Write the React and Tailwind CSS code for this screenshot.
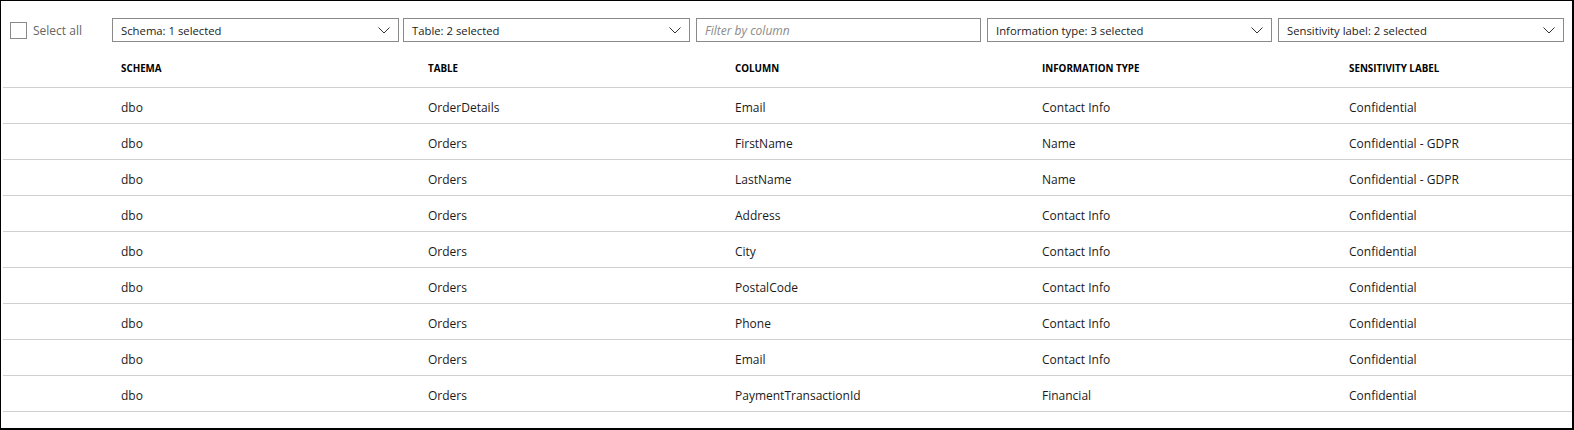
import React from "react";

const rows = [
  ["dbo", "OrderDetails", "Email", "Contact Info", "Confidential"],
  ["dbo", "Orders", "FirstName", "Name", "Confidential - GDPR"],
  ["dbo", "Orders", "LastName", "Name", "Confidential - GDPR"],
  ["dbo", "Orders", "Address", "Contact Info", "Confidential"],
  ["dbo", "Orders", "City", "Contact Info", "Confidential"],
  ["dbo", "Orders", "PostalCode", "Contact Info", "Confidential"],
  ["dbo", "Orders", "Phone", "Contact Info", "Confidential"],
  ["dbo", "Orders", "Email", "Contact Info", "Confidential"],
  ["dbo", "Orders", "PaymentTransactionId", "Financial", "Confidential"],
];

function Chevron() {
  return (
    <svg width="12" height="7" viewBox="0 0 12 7" className="shrink-0">
      <polyline points="0.5,0.5 6,6 11.5,0.5" fill="none" stroke="#333" strokeWidth="1" />
    </svg>
  );
}

function Dropdown({ label, className }) {
  return (
    <div className={"shrink-0 h-[24px] border border-[#8a8a8a] flex items-center justify-between pl-[8px] pr-[8px] text-[11.3px] text-[#222] " + className}>
      <span className="truncate pt-[2px]">{label}</span>
      <Chevron />
    </div>
  );
}

export default function App() {
  return (
    <div
      className="w-[1574px] h-[430px] bg-white border-t border-l border-r-2 border-b-2 border-black flex flex-col"
      style={{ fontFamily: '"Open Sans", "Noto Sans", sans-serif' }}
    >
      <div className="flex items-center pt-[17px] pl-[9px]">
        <div className="w-[102px] flex items-center shrink-0">
          <div className="w-[17px] h-[17px] border border-[#8a8a8a] bg-white mt-[1px]" />
          <span className="ml-[6px] pt-[2px] text-[12px] text-[#666]">Select all</span>
        </div>
        <div className="flex items-center">
          <Dropdown label="Schema: 1 selected" className="w-[287px]" />
          <Dropdown label="Table: 2 selected" className="w-[287px] ml-[4px]" />
          <div className="shrink-0 w-[285px] ml-[6px] h-[24px] border border-[#8a8a8a] flex items-center pl-[8px] text-[12px] italic text-[#8a8a8a]">
            <span className="pt-[2px]">Filter by column</span>
          </div>
          <Dropdown label="Information type: 3 selected" className="w-[285px] ml-[6px]" />
          <Dropdown label="Sensitivity label: 2 selected" className="w-[286px] ml-[6px]" />
        </div>
      </div>
      <div className="ml-[2px]">
        <div className="h-[46px] border-b border-[#d0d0d0] flex items-center pt-[9px] pl-[118px] text-[9.8px] font-bold text-black uppercase">
          <div className="w-[307px]">Schema</div>
          <div className="w-[307px]">Table</div>
          <div className="w-[307px]">Column</div>
          <div className="w-[307px]">Information type</div>
          <div className="flex-1">Sensitivity label</div>
        </div>
        {rows.map((r, i) => (
          <div
            key={i}
            className="h-[36px] border-b border-[#d0d0d0] flex items-center pt-[4px] pl-[118px] text-[12px] text-[#1a1a1a]"
          >
            <div className="w-[307px]">{r[0]}</div>
            <div className="w-[307px]">{r[1]}</div>
            <div className="w-[307px]">{r[2]}</div>
            <div className="w-[307px]">{r[3]}</div>
            <div className="flex-1">{r[4]}</div>
          </div>
        ))}
      </div>
    </div>
  );
}
